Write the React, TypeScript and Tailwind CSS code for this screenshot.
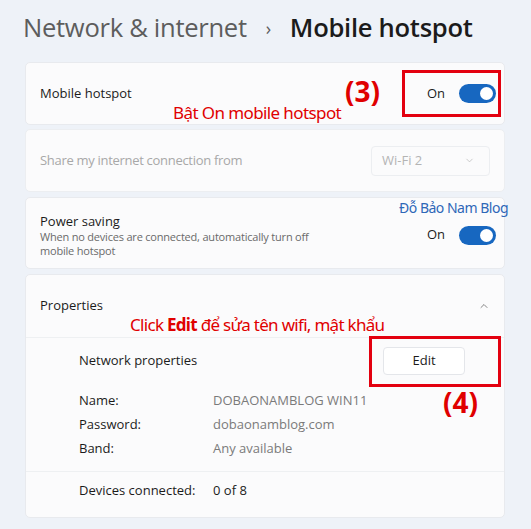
import { ChevronDown, ChevronUp } from "lucide-react";

function Toggle() {
	return (
		<div className="flex items-center gap-[14px]">
			<span className="text-[13px] text-[#1b1b1b]">On</span>
			<div className="w-[37px] h-[19px] rounded-full bg-[#1767c0] flex items-center justify-end pr-[3px]">
				<div className="w-[13px] h-[13px] rounded-full bg-white" />
			</div>
		</div>
	);
}

function Row({ label, value, muted }: { label: string; value: string; muted?: boolean }) {
	return (
		<div className="flex items-center h-[24px] text-[13px]">
			<span className="w-[134px] text-[#1b1b1b]">{label}</span>
			<span className={muted ? "text-[#7a7a7a]" : "text-[#1b1b1b]"}>{value}</span>
		</div>
	);
}

export default function App() {
	return (
		<div
			className="w-[531px] h-[529px] bg-[#eef2f8] overflow-hidden"
			style={{ fontFamily: '"Open Sans", "Noto Sans", sans-serif' }}
		>
			{/* Title */}
			<div className="flex items-center h-[56px] pl-[23px] pt-[1px] text-[25.6px] tracking-[-0.3px]">
				<span className="text-[#5d5d5d]">Network &amp; internet</span>
				<span className="text-[#5d5d5d] text-[18px] mx-[19px]">›</span>
				<span className="text-[#1b1b1b] font-semibold">Mobile hotspot</span>
			</div>

			<div className="flex flex-col gap-[5px] ml-[25px] mt-[6px] w-[480px]">
				{/* Mobile hotspot */}
				<div className="relative h-[63px] rounded-[5px] bg-[#fbfbfc] border border-[#e8eaee] flex items-center justify-between pl-[14px] pr-[8px]">
					<span className="text-[13px] text-[#1b1b1b]">Mobile hotspot</span>
					<Toggle />
					<div className="absolute left-[319px] top-[14px] text-[28px] font-bold text-[#e00000] leading-none">
						(3)
					</div>
					<div className="absolute left-[376px] top-[7px] w-[99px] h-[47px] border-[3px] border-[#e3000f]" />
					<div className="absolute left-[147px] top-[41px] text-[17px] text-[#e00000] leading-none tracking-[-0.6px]" style={{ fontFamily: '"Noto Sans", sans-serif' }}>
						Bật On mobile hotspot
					</div>
				</div>

				{/* Share connection */}
				<div className="h-[63px] -mt-[1px] rounded-[5px] bg-[#fbfbfc] border border-[#eceef1] flex items-center justify-between pl-[14px] pr-[14px]">
					<span className="text-[13px] text-[#a8a8a8] tracking-[-0.3px]">Share my internet connection from</span>
					<div className="w-[119px] h-[30px] rounded-[4px] border border-[#eceef1] bg-[#fbfbfc] flex items-center justify-between pl-[10px] pr-[14px]">
						<span className="text-[13px] text-[#b4b4b4]">Wi-Fi 2</span>
						<ChevronDown className="w-[11px] h-[11px] text-[#b4b4b4]" strokeWidth={1.5} />
					</div>
				</div>

				{/* Power saving */}
				<div className="relative h-[72px] rounded-[5px] bg-[#fbfbfc] border border-[#e8eaee] flex items-center justify-between pl-[14px] pr-[8px] pt-[4px]">
					<div className="flex flex-col">
						<span className="text-[13px] text-[#1b1b1b] leading-[17px]">Power saving</span>
						<span className="text-[11px] text-[#6a6a6a] leading-[14px] w-[300px] tracking-[-0.2px]">
							When no devices are connected, automatically turn off mobile hotspot
						</span>
					</div>
					<Toggle />
					<div className="absolute right-[-4px] top-[3px] text-[14px] text-[#2e67b8] leading-none tracking-[-0.5px]" style={{ fontFamily: '"Noto Sans", sans-serif' }}>
						Đỗ Bảo Nam Blog
					</div>
				</div>

				{/* Properties */}
				<div className="relative rounded-[5px] bg-[#fbfbfc] border border-[#e8eaee] flex flex-col">
					<div className="h-[63px] flex items-center justify-between pl-[14px] pr-[14px] border-b border-[#eef0f2]">
						<span className="text-[13px] text-[#1b1b1b]">Properties</span>
						<ChevronUp className="w-[12px] h-[12px] text-[#5d5d5d]" strokeWidth={1.5} />
					</div>
					<div className="flex flex-col pl-[53px] pt-[8px] pb-[10px] border-b border-[#eef0f2]">
						<div className="flex items-center justify-between h-[30px] pr-[39px] mb-[13px]">
							<span className="text-[13px] text-[#1b1b1b]">Network properties</span>
							<button className="w-[82px] h-[28px] rounded-[4px] bg-white border border-[#e4e6ea] text-[13px] text-[#1b1b1b]">
								Edit
							</button>
						</div>
						<Row label="Name:" value="DOBAONAMBLOG WIN11" muted />
						<Row label="Password:" value="dobaonamblog.com" muted />
						<Row label="Band:" value="Any available" muted />
					</div>
					<div className="h-[45px] flex items-center pl-[53px] pb-[7px]">
						<Row label="Devices connected:" value="0 of 8" />
					</div>

					<div className="absolute left-[104px] top-[41px] text-[17px] text-[#e00000] leading-none tracking-[-0.7px]" style={{ fontFamily: '"Noto Sans", sans-serif' }}>
						Click <span className="font-bold">Edit</span> để sửa tên wifi, mật khẩu
					</div>
					<div className="absolute left-[343px] top-[61px] w-[132px] h-[51px] border-[3px] border-[#e3000f]" />
					<div className="absolute left-[417px] top-[113px] text-[28px] font-bold text-[#e00000] leading-none">
						(4)
					</div>
				</div>
			</div>
		</div>
	);
}
